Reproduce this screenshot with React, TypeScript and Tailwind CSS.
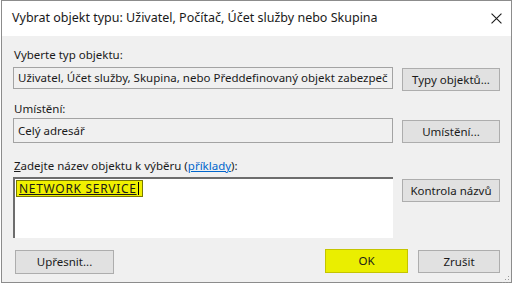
import React from "react";

function CloseIcon() {
  return (
    <svg viewBox="0 0 10 10" className="h-[11px] w-[11px]" fill="none" stroke="#1a1a1a" strokeWidth="1">
      <path d="M0.5 0.5 9.5 9.5M9.5 0.5 0.5 9.5" />
    </svg>
  );
}

function Grip() {
  return (
    <svg viewBox="0 0 8 8" className="h-[8px] w-[8px]" fill="#9a9a9a">
      <rect x="6" y="0" width="1" height="1" />
      <rect x="3" y="3" width="1" height="1" />
      <rect x="6" y="3" width="1" height="1" />
      <rect x="0" y="6" width="1" height="1" />
      <rect x="3" y="6" width="1" height="1" />
      <rect x="6" y="6" width="1" height="1" />
    </svg>
  );
}

function Btn({ children, className = "" }: { children: React.ReactNode; className?: string }) {
  return (
    <div
      className={
        "flex items-center justify-center whitespace-nowrap border border-[#adadad] bg-[#e1e1e1] text-[11.5px] text-[#1a1a1a] " +
        className
      }
    >
      {children}
    </div>
  );
}

export default function App() {
  return (
    <div className="h-[284px] w-[514px] bg-white" style={{ fontFamily: '"Noto Sans", "Open Sans", sans-serif' }}>
      <div className="ml-px flex h-[283px] w-[511px] flex-col border border-[#8c8c8c] bg-[#f0f0f0]">
        {/* title bar */}
        <div className="flex h-[35px] shrink-0 items-center justify-between bg-white pl-[10px] pr-[9px]">
          <span className="text-[12.5px] text-[#1a1a1a]">
            Vybrat objekt typu: Uživatel, Počítač, Účet služby nebo Skupina
          </span>
          <CloseIcon />
        </div>

        <div className="flex flex-1 flex-col pl-[11px] pr-[11px] pt-[11px] text-[11.5px] text-[#1a1a1a]">
          <div className="h-[16px] pl-px leading-[16px]">Vyberte typ objektu:</div>
          <div className="mt-[4px] flex h-[24px]">
            <div className="flex h-[22px] flex-1 items-center overflow-hidden whitespace-nowrap border border-[#a3a3a3] pl-[4px]">
              Uživatel, Účet služby, Skupina, nebo Předdefinovaný objekt zabezpeč
            </div>
            <Btn className="ml-[9px] mt-px h-[23px] w-[98px]">Typy objektů...</Btn>
          </div>

          <div className="mt-[10px] h-[16px] pl-px leading-[16px]">Umístění:</div>
          <div className="mt-px flex h-[26px]">
            <div className="flex h-[25px] flex-1 items-center overflow-hidden whitespace-nowrap border border-[#a3a3a3] pl-[4px]">
              Celý adresář
            </div>
            <Btn className="ml-[9px] mt-[2px] h-[23px] w-[98px]">Umístění...</Btn>
          </div>

          <div className="mt-[14px] h-[16px] pl-px leading-[16px]">
            <span className="underline">Z</span>adejte název objektu k výběru (
            <span className="text-[#0066cc] underline">příklady</span>):
          </div>
          <div className="mt-[3px] flex">
            <div className="h-[61px] flex-1 border-l-2 border-t-2 border-[#6d6d6d] bg-white pl-px pt-px">
              <span className="inline-flex h-[17px] items-center border border-[#7a7a00] bg-[#f0f000] pl-[2px] pr-[3px] text-[12px] leading-[15px] tracking-[0.7px]">
                <span className="underline">NETWORK SERVICE</span>
                <span className="ml-px inline-block h-[13px] w-px bg-black" />
              </span>
            </div>
            <Btn className="ml-[9px] mt-[2px] h-[23px] w-[98px]">Kontrola názvů</Btn>
          </div>

          <div className="mt-[11px] flex items-start">
            <Btn className="ml-[2px] mt-px h-[24px] w-[99px]">Upřesnit...</Btn>
            <div className="flex-1" />
            <Btn className="h-[24px] w-[83px] border-[#c4c400] bg-[#eaee00]">OK</Btn>
            <Btn className="ml-[10px] mt-px h-[23px] w-[82px]">Zrušit</Btn>
          </div>
          <div className="mr-[-10px] mt-[2px] flex justify-end">
            <Grip />
          </div>
        </div>
      </div>
    </div>
  );
}
